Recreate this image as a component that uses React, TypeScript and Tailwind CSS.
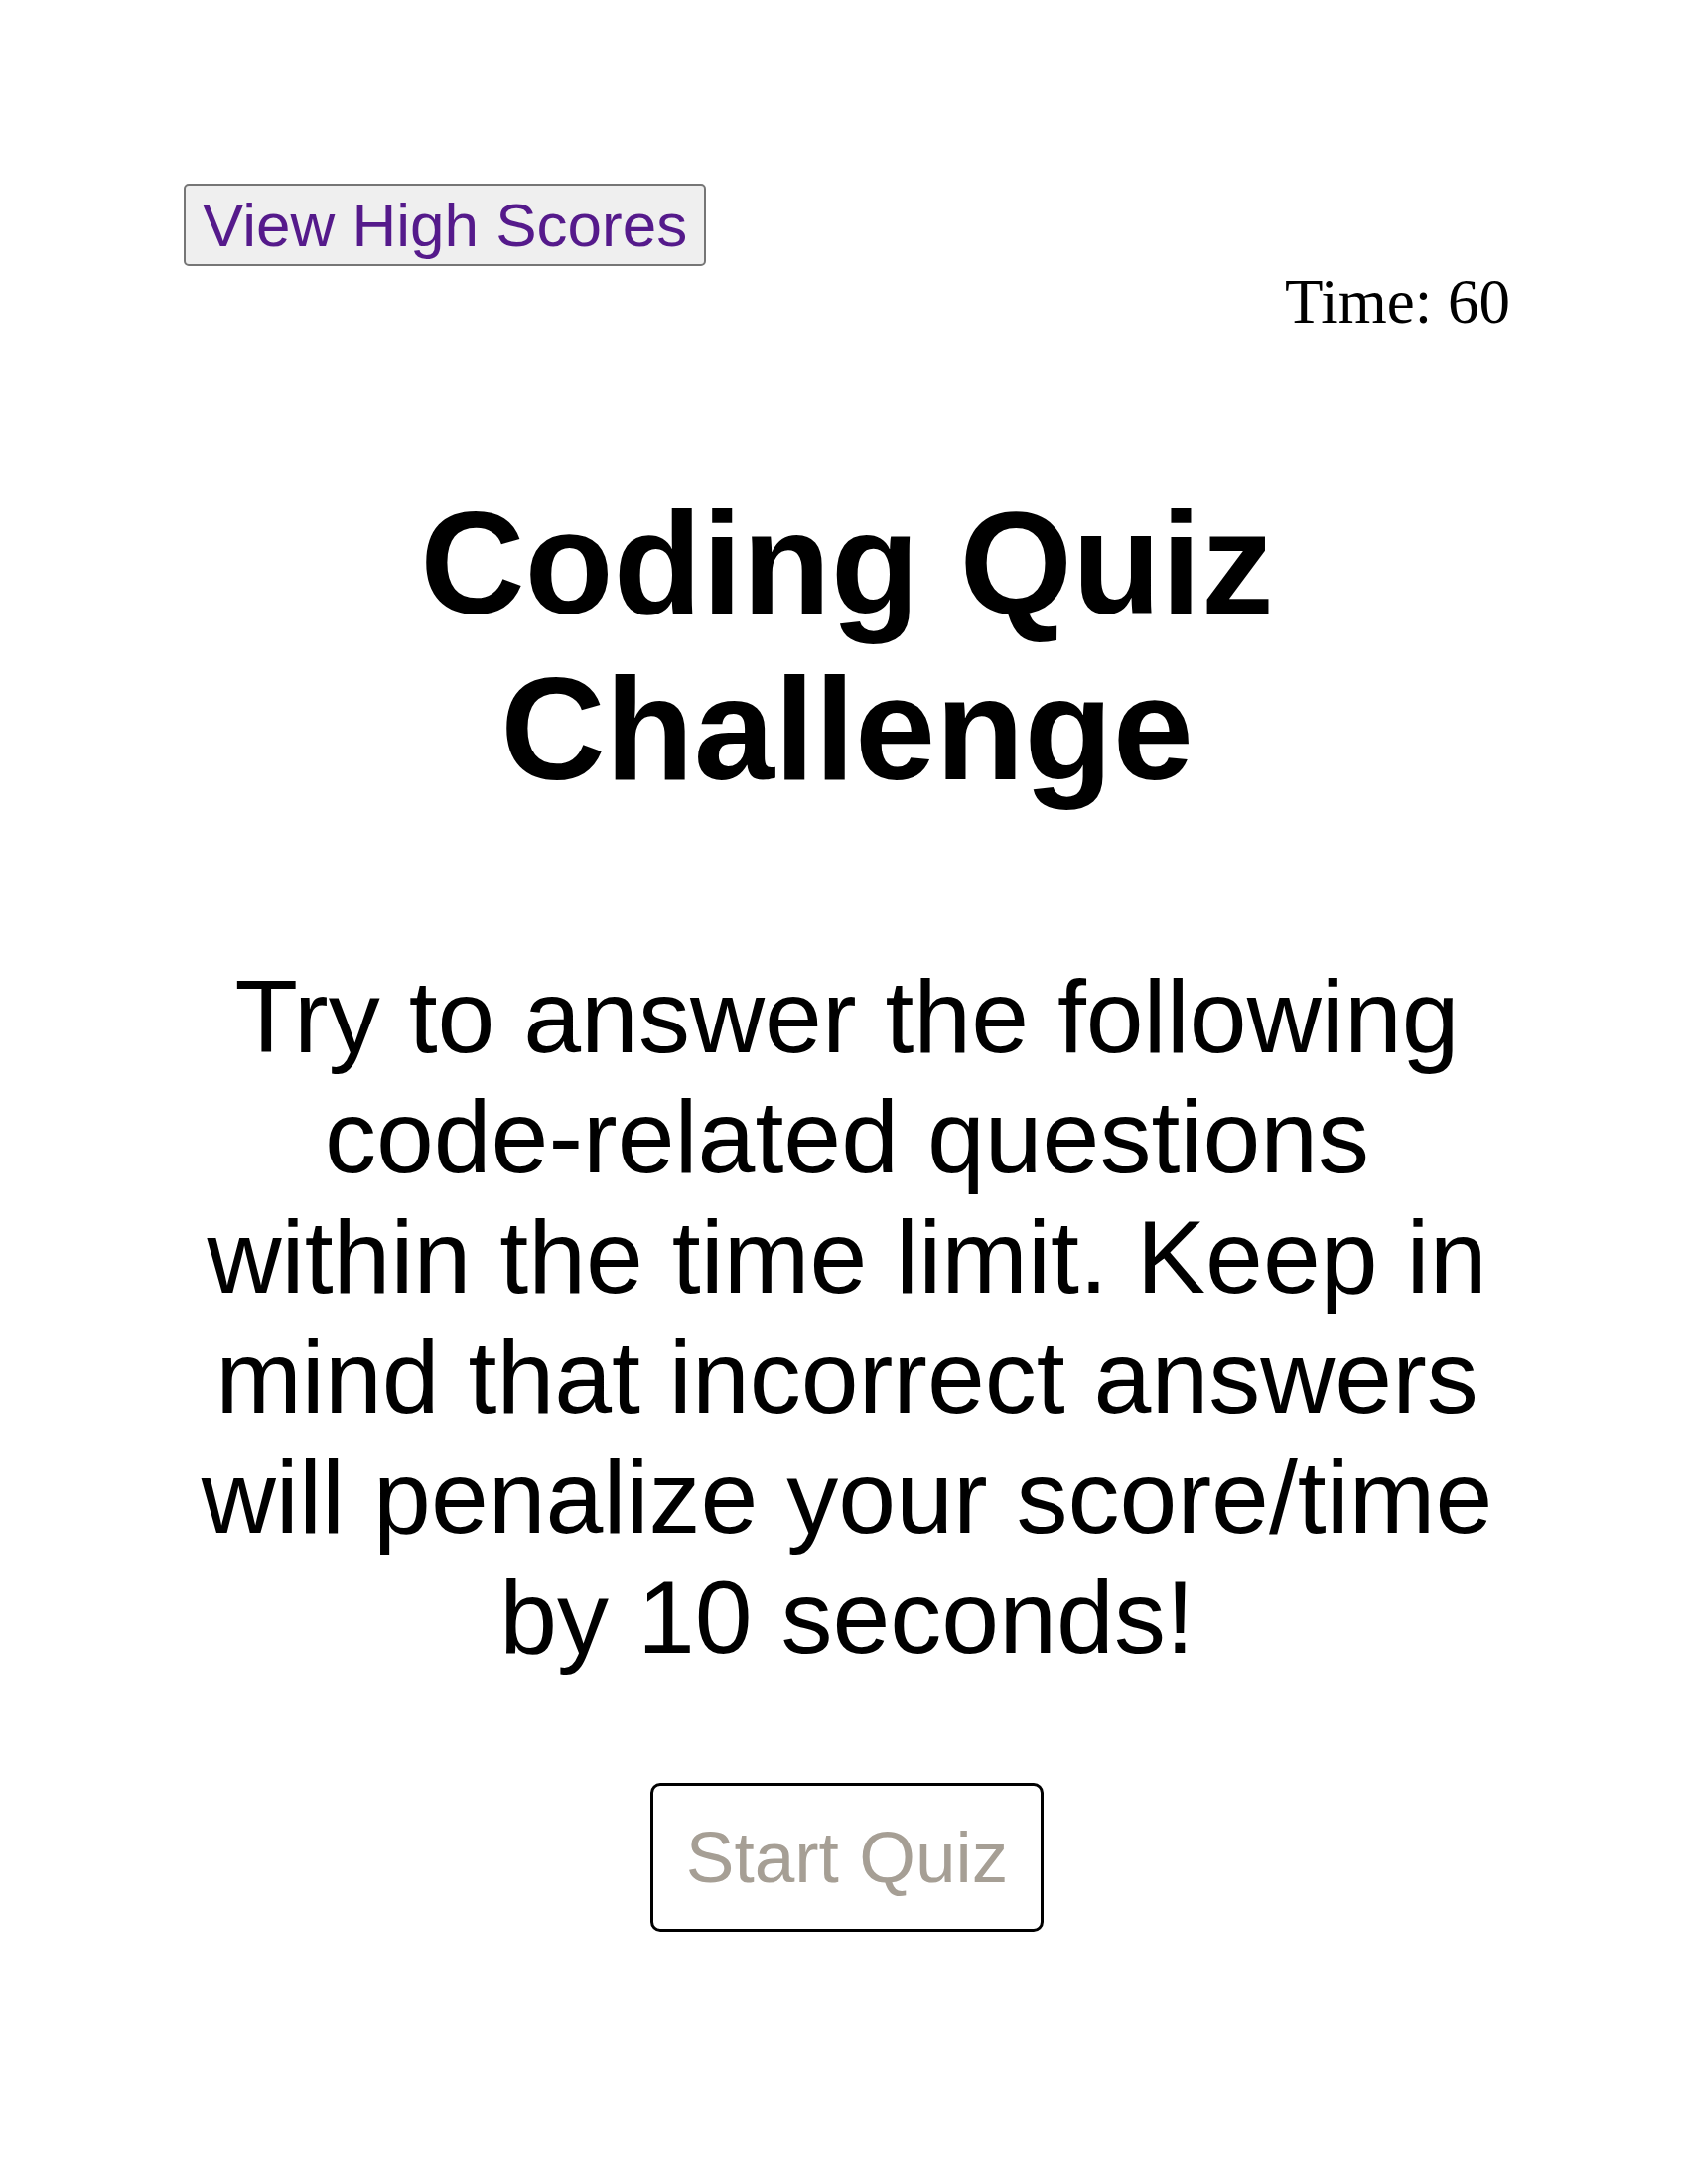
import React from 'react';

const App: React.FC = () => {
  return (
    <div className="min-h-[2200px] bg-white pt-[185px] pl-[185px] pr-[179px] font-['Liberation_Sans',Arial,sans-serif] text-black">
      {/* Header */}
      <header>
        <button className="bg-[#efefef] border-2 border-[#767676] rounded-[5px] px-[17px] py-[4px] text-[62px] leading-[71px] text-[#551a8b]">
          View High Scores
        </button>
        <div className="text-right font-['Liberation_Serif','Times_New_Roman',serif] text-[63px] leading-[72px]">
          Time: <span>60</span>
        </div>
      </header>

      {/* Intro */}
      <main className="text-center">
        <h1 className="mt-[144px] text-[146px] leading-[167px] font-bold">
          Coding Quiz Challenge
        </h1>
        <p className="mt-[146px] text-[104px] leading-[121px]">
          Try to answer the following code-related questions within the time limit. Keep in mind that incorrect answers will penalize your score/time by 10 seconds!
        </p>
        <button className="mt-[106px] border-[3px] border-black rounded-[10px] bg-white px-[33px] py-[30px] text-[73px] leading-[84px] text-[#a69f95]">
          Start Quiz
        </button>
      </main>
    </div>
  );
};

export default App;
